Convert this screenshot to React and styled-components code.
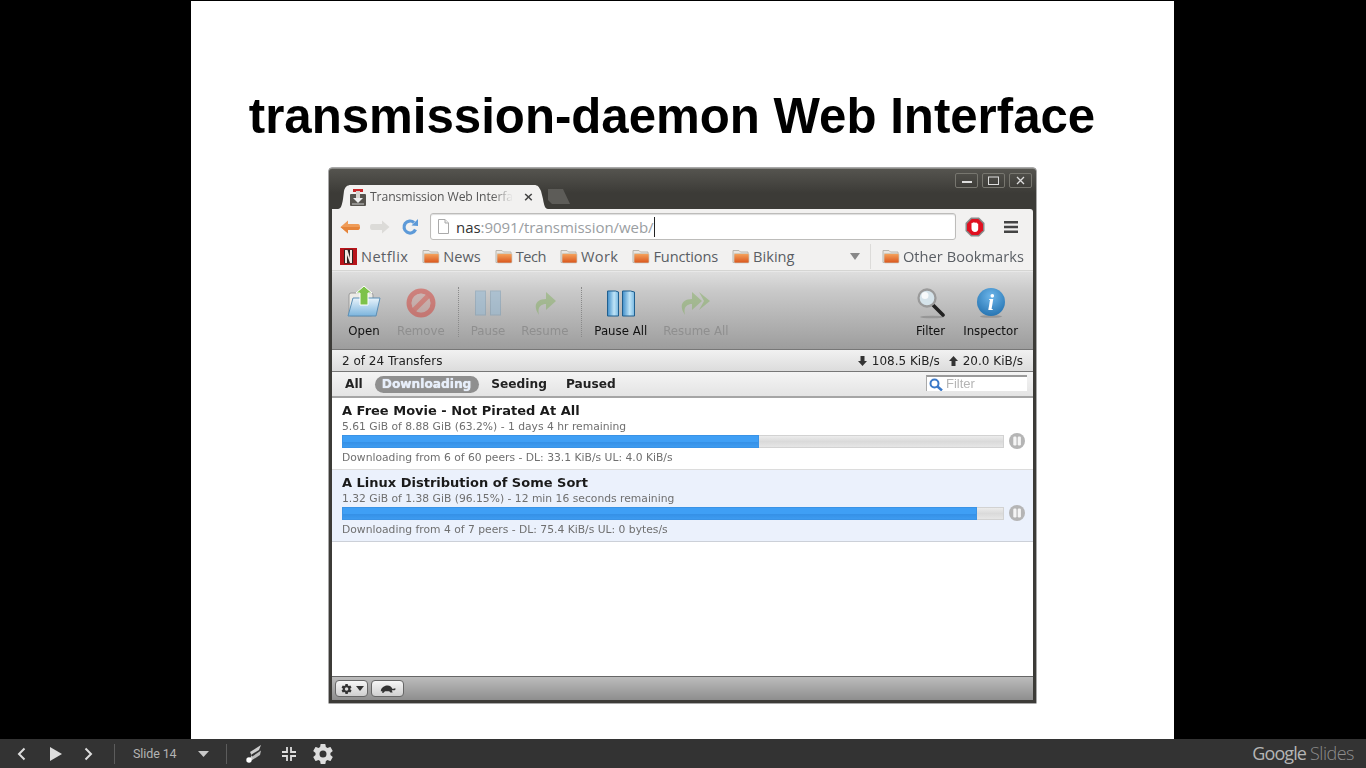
import React from 'react';
import styled, { createGlobalStyle } from 'styled-components';

const Global = createGlobalStyle`
  html, body { margin: 0; padding: 0; background: #000; overflow: hidden; }
  * { box-sizing: border-box; }
`;
const Page = styled.div`
  width: 1366px; height: 768px; display: flex; flex-direction: column; background: #000;
`;
const Stage = styled.main`
  height: 739px; display: flex; justify-content: flex-start; padding: 1px 0 0 191px;
`;
const Slide = styled.section`
  width: 983px; background: #fff; display: flex; flex-direction: column; align-items: center;
`;
const Title = styled.h1`
  margin: 86px 21px 0 0; height: 81px; font: bold 49.2px/58px "Liberation Sans", Arial, sans-serif; color: #000; white-space: nowrap;
`;
const Shot = styled.div`
  width: 707px; height: 535px; display: flex; flex-direction: column; filter: blur(0.35px);
  background: linear-gradient(#55544f, #3c3b37 24px); border-radius: 3px 3px 0 0;
  border-top: 1px solid #8a8a86; padding: 0 3px 3px;
  box-shadow: 0 0 0 .5px #555;
`;
const TitleBar = styled.div`
  height: 40px; display: flex; align-items: flex-end; position: relative; padding-left: 6px;
`;
const Tab = styled.div`
  width: 210px; height: 24px; flex: none; background: #f2f1f0; display: flex; align-items: center; padding: 0 0 0 12px; gap: 4px;
  clip-path: path("M0 24 C3 24 4 20 5 14 L6 6 C7 2 9 0 13 0 L196 0 C200 0 201 2 203 6 L205 14 C206 20 207 24 210 24 Z");
`;
const TabLabel = styled.span`
  white-space: nowrap; font: 12.2px/16px "Open Sans", sans-serif; color: #555;
  letter-spacing: -.1px; width: 143px; flex: none;
  mask-image: linear-gradient(90deg, #000 85%, transparent 100%);
`;
const TabClose = styled.span`
  margin-left: 6px; font: bold 13px/16px "DejaVu Sans", sans-serif; color: #444;
`;
const NewTab = styled.div`
  width: 26px; height: 15px; margin: 0 0 5px -3px; background: #5d5c58;
  clip-path: polygon(3px 0, 18px 0, 25px 15px, 7px 15px, 3px 11px);
`;
const WinButtons = styled.div`
  position: absolute; right: 1px; top: 4px; display: flex; gap: 4px;
`;
const WinBtn = styled.div`
  width: 23px; height: 15px; border: 1px solid #77766f; border-radius: 2px; display: flex; align-items: center; justify-content: center;
  background: linear-gradient(#4e4d48, #3f3e3a);
`;
const ChromeBar = styled.div`
  height: 33px; background: #f2f1f0; border-radius: 0 3px 0 0; display: flex; align-items: center; padding: 2px 12px 0 3px;
`;
const NavIcon = styled.span`
  width: 30px; height: 22px; display: flex; align-items: center; justify-content: center;
`;
const Omni = styled.div`
  width: 526px; height: 27px; margin: 0 9px 0 5px; background: #fff; border: 1px solid #bdbcba; border-radius: 3px;
  display: flex; align-items: center; padding-left: 7px; gap: 7px; box-shadow: inset 0 1px 1px #ddd;
`;
const Url = styled.span`
  font: 15px/20px "Open Sans", sans-serif; color: #9a9ea2; letter-spacing: -.05px; white-space: nowrap;
  border-right: 1px solid #222;
  b { font-weight: 400; color: #333; }
`;
const EndIcons = styled.div`
  display: flex; align-items: center; gap: 19px;
`;
const Bookmarks = styled.div`
  height: 29px; background: #f2f1f0; display: flex; align-items: center; padding: 0 9px 0 8px; border-bottom: 1px solid #d5d5d3;
`;
const Mark = styled.span`
  display: flex; align-items: center; gap: 3px; margin-right: ${p => p.$last ? 0 : 14}px; font: 14.6px/18px "Open Sans", sans-serif; color: #5a5e64; white-space: nowrap;
  letter-spacing: ${p => p.$ls ?? 0}px;
`;
const BarSpacer = styled.div` flex: 1; `;
const MoreCaret = styled.span`
  width: 0; height: 0; border: 5px solid transparent; border-top: 7px solid #888; border-bottom: 0; margin-right: 10px;
`;
const BarSep = styled.span`
  width: 1px; height: 25px; background: #dcdbd9; margin-right: 11px;
`;
const App2 = styled.div`
  flex: 1; display: flex; flex-direction: column; background: #fff; min-height: 0;
`;
const Toolbar = styled.div`
  height: 79px; flex: none; display: flex; align-items: flex-start; padding: 10px 15px 0 14px;
  background: linear-gradient(#dedede, #c9c9c9 25%, #9d9d9d);
  border-top: 1px solid #e8e8e8; border-bottom: 1px solid #777;
`;
const Tool = styled.div`
  display: flex; flex-direction: column; align-items: center; margin-right: ${p => p.$mr ?? 16}px;
  font: 11.75px/14px "DejaVu Sans", Verdana, sans-serif; color: ${p => p.$off ? '#8f8f8f' : '#111'}; white-space: nowrap;
`;
const ToolIcon = styled.span`
  height: 42px; display: flex; align-items: center; justify-content: center;
  opacity: ${p => p.$off ? .45 : 1};
`;
const ToolSep = styled.span`
  height: 50px; margin: 5px 12px 0 -3px; border-left: 1px dotted #8a8a8a;
`;
const Status = styled.div`
  height: 22px; flex: none; display: flex; align-items: center; justify-content: space-between; padding: 1px 10px 0;
  background: linear-gradient(#f1f1f1, #dcdcdc); border-bottom: 1px solid #777;
  font: 12px/14px "DejaVu Sans", Verdana, sans-serif; color: #222;
`;
const Rates = styled.div` display: flex; align-items: center; gap: 9px; `;
const Rate = styled.span` display: flex; align-items: center; gap: 5px; `;
const FilterBar = styled.div`
  height: 26px; flex: none; display: flex; align-items: center; padding: 0 6px 0 6px;
  background: linear-gradient(#f4f4f4, #e4e4e4); border-bottom: 2px solid #a5a5a5;
`;
const Seg = styled.span`
  font: bold 12.2px/17px "DejaVu Sans", Verdana, sans-serif; color: #222; white-space: nowrap; padding: 0 7px; border-radius: 9px;
  margin-right: 5px;
  ${p => p.$on && `background: #8f8f8f; color: #e6eefb; text-shadow: 0 0 1px #fff; padding: 0 8px 0 7px;`}
`;
const SearchBox = styled.div`
  margin: -2px 0 0 auto; width: 101px; height: 16px; background: #fff; border-top: 2px solid #9a9a9a; border-left: 1px solid #aaa;
  display: flex; align-items: center; gap: 3px; padding-left: 2px;
  font: 13px/14px "Liberation Sans", Arial, sans-serif; color: #b5b5b5;
`;
const List = styled.div` flex: 1; background: #fff; min-height: 0; `;
const Row = styled.div`
  height: 72px; padding: 5px 8px 0 10px; border-bottom: 1px solid ${p => p.$alt ? '#ccd0d8' : '#dcdcdc'};
  background: ${p => p.$alt ? '#ebf1fc' : '#fff'};
`;
const RowTitle = styled.div`
  font: bold 13px/16px "DejaVu Sans", Verdana, sans-serif; color: #1a1a1a; white-space: nowrap;
`;
const Meta = styled.div`
  font: 10.75px/15px "DejaVu Sans", Verdana, sans-serif; color: #6f6f6f; white-space: nowrap;
`;
const ProgressRow = styled.div`
  display: flex; align-items: center; gap: 5px; height: 14px; margin: 0 0 2px;
`;
const Track = styled.div`
  width: 662px; height: 13px; flex: none; border: 1px solid #d2d2d2; background: linear-gradient(#ececec, #dadada 50%, #e6e6e6);
  display: flex;
`;
const Fill = styled.div`
  margin: -1px 0 -1px -1px; background: linear-gradient(#3f9ff5 55%, #3590e6 55%, #3d9bf0); border: 1px solid #3a93e6;
`;
const FootBar = styled.div`
  height: 24px; flex: none; display: flex; align-items: center; gap: 3px; padding: 0 3px;
  background: linear-gradient(#bcbcbc, #8e8e8e); border-top: 1px solid #666;
`;
const FootBtn = styled.div`
  width: ${p => p.$w}px; height: 17px; border: 1px solid #666; border-radius: 4px; background: linear-gradient(#f6f6f6, #cfcfcf);
  display: flex; align-items: center; justify-content: center; gap: 3px;
`;
const Bottom = styled.footer`
  height: 29px; background: #333; display: flex; align-items: center; color: #bbb; font-family: Roboto, sans-serif; padding-right: 12px;
`;
const Ctrl = styled.span`
  width: ${p => p.$w}px; display: flex; align-items: center; justify-content: center; flex: none;
`;
const CtrlSep = styled.span`
  width: 1px; height: 20px; background: #5c5c5c; flex: none;
`;
const SlideNo = styled.span`
  font-size: 12.5px; color: #b4b4b4; width: 66px; padding-left: 18px; white-space: nowrap; letter-spacing: -.1px;
`;
const Brand = styled.div`
  margin: 0 0 2px auto; font: 500 18px/24px "Open Sans", sans-serif; color: #b5b5b5; letter-spacing: -.9px; white-space: nowrap;
  span { font-weight: 300; color: #8d8d8d; letter-spacing: -.5px; margin-left: 4px; }
`;

const Folder = () => (
  <svg width="18" height="16" viewBox="0 0 18 16">
    <defs><linearGradient id="fo" x1="0" y1="0" x2="0" y2="1"><stop offset="0" stopColor="#f6a55e" /><stop offset="1" stopColor="#d9541a" /></linearGradient></defs>
    <path d="M1 2.5h6l1.500 1.500H16v10.500H1z" fill="#e8e6e2" stroke="#b9b5ad" strokeWidth="1" />
    <rect x="2" y="5.500" width="15" height="9.500" rx="1" fill="url(#fo)" stroke="#c9cbc4" strokeWidth=".7" />
  </svg>
);
const Netflix = () => (
  <svg width="18" height="17" viewBox="0 0 18 17">
    <rect width="17" height="17" fill="#b8141a" />
    <rect x="4" y="1.500" width="9" height="14" fill="#2b2422" />
    <path d="M5 2v13h2V7l3 8h2V2h-2v8L7.500 2z" fill="#f1e9e2" />
  </svg>
);
const Fav = () => (
  <svg width="16" height="17" viewBox="0 0 16 17">
    <rect x="3" y="0" width="10" height="3" fill="#c9282a" />
    <rect x="0" y="5" width="16" height="12" rx="1" fill="#57544f" />
    <rect x="6" y="2" width="4" height="7" fill="#d8d5d0" />
    <path d="M3 9h10l-5 5z" fill="#eee" />
    <rect x="2" y="14.500" width="12" height="1" fill="#ccc" />
  </svg>
);
const Back = () => (
  <svg width="20" height="14" viewBox="0 0 20 14"><path d="M8 .5 .5 7 8 13.500V10h10a2 3 0 0 0 0-6H8z" fill="#ef9c58" /><path d="M.5 7 8 13.500V10h10a2 3 0 0 0 1.800-3z" fill="#e5843a" /></svg>
);
const Forward = () => (
  <svg width="20" height="14" viewBox="0 0 20 14"><path d="M12 .5 19.500 7 12 13.500V10H2a2 3 0 0 1 0-6h10z" fill="#dcdbd8" /></svg>
);
const Reload = () => (
  <svg width="18" height="18" viewBox="0 0 18 18"><path d="M14.500 11.500a6 6 0 1 1-1.500-7" fill="none" stroke="#5d9ad8" strokeWidth="3.200" /><path d="M10.500 7.500 17 1v7z" fill="#5d9ad8" /></svg>
);
const Doc = () => (
  <svg width="11" height="15" viewBox="0 0 11 15"><path d="M.5.500h6.500l3.500 3.500v10.500H.5z" fill="#fff" stroke="#aaa" /><path d="M7 .5V4h3.500" fill="#eee" stroke="#aaa" /></svg>
);
const Stop = () => (
  <svg width="20" height="20" viewBox="0 0 20 20">
    <path d="M6 .5h8L19.500 6v8L14 19.500H6L.5 14V6z" fill="#888" />
    <path d="M6.700 2h6.600L18 6.700v6.600L13.300 18H6.700L2 13.300V6.700z" fill="#e01020" />
    <path d="M6.500 6.500c0-1 1-1 1.200-.2V6c0-1 1.300-1 1.400 0 .1-1 1.400-1 1.500 0 .2-.8 1.400-.7 1.400.2v.6c.5-.5 1.400-.2 1.200.6v3.800C13.500 13.500 12 15 10 15s-3.500-1.500-3.500-3.500z" fill="#fff" />
  </svg>
);
const Menu = () => (
  <svg width="14" height="14" viewBox="0 0 14 14"><path d="M0 1h14v2.500H0zM0 5.700h14v2.500H0zM0 10.500h14V13H0z" fill="#444" /></svg>
);
const OpenI = () => (
  <svg width="36" height="36" viewBox="0 0 36 36">
    <defs><linearGradient id="op" x1="0" y1="0" x2="0" y2="1"><stop offset="0" stopColor="#e8f3fb" /><stop offset="1" stopColor="#7bb4dd" /></linearGradient></defs>
    <rect x="3" y="8" width="24" height="23" rx="2" fill="#ecebe6" stroke="#999" />
    <path d="M7 13h27l-4 18H2z" fill="url(#op)" stroke="#5c8fb5" />
    <path d="M18 1l8 7h-4v12h-8V8h-4z" fill="#7dc24a" stroke="#fff" />
  </svg>
);
const RemoveI = () => (
  <svg width="30" height="30" viewBox="0 0 30 30"><circle cx="15" cy="15" r="12" fill="none" stroke="#d42a20" strokeWidth="5" /><path d="M7 23 23 7" stroke="#d42a20" strokeWidth="5" /><circle cx="15" cy="15" r="9.500" fill="#e05040" opacity=".35" /></svg>
);
const Bars = () => (
  <svg width="26" height="26" viewBox="0 0 26 26"><rect x=".5" y="1" width="10" height="24" fill="#8bb8da" stroke="#6f97b5" /><rect x="15.500" y="1" width="10" height="24" fill="#8bb8da" stroke="#6f97b5" /></svg>
);
const ResumeI = () => (
  <svg width="24" height="26" viewBox="0 0 24 26"><path d="M6 25C-1 15 4 9 13 9V2l10 9-10 9v-6c-5 0-9 3-7 11z" fill="#7fae58" /></svg>
);
const ResumeAllI = () => (
  <svg width="31" height="26" viewBox="0 0 31 26"><path d="M5 25C-2 15 3 9 12 9V2l10 9-10 9v-6c-5 0-9 3-7 11z" fill="#7fae58" /><path d="M19 2l11 9-11 9 5-9z" fill="#7fae58" /></svg>
);
const PauseAllI = () => (
  <svg width="28" height="27" viewBox="0 0 28 27">
    <defs><linearGradient id="pa" x1="0" y1="0" x2="1" y2="0"><stop offset="0" stopColor="#3f8dc9" /><stop offset=".6" stopColor="#bfe4f7" /><stop offset="1" stopColor="#76b6e0" /></linearGradient></defs>
    <path d="M.5 1h8l3 1v24H.5z" fill="url(#pa)" stroke="#1f5f8f" /><path d="M15.500 1h8l4 1v24h-12z" fill="url(#pa)" stroke="#1f5f8f" />
  </svg>
);
const MagI = () => (
  <svg width="28" height="31" viewBox="0 0 28 31">
    <ellipse cx="15" cy="29" rx="12" ry="1.300" fill="#777" opacity=".5" />
    <path d="M15 16 26 27" stroke="#222" strokeWidth="3.600" strokeLinecap="round" />
    <circle cx="10" cy="10" r="8.500" fill="#d5e3ea" stroke="#9a9a9a" strokeWidth="2.300" />
    <circle cx="8" cy="7.500" r="3.500" fill="#fff" opacity=".8" />
  </svg>
);
const InfoI = () => (
  <svg width="28" height="30" viewBox="0 0 28 30">
    <defs><radialGradient id="in" cx=".5" cy=".3" r=".8"><stop offset="0" stopColor="#6db6ea" /><stop offset="1" stopColor="#1d6cab" /></radialGradient></defs>
    <ellipse cx="14" cy="28.500" rx="11" ry="1.300" fill="#777" opacity=".5" />
    <circle cx="14" cy="14" r="14" fill="url(#in)" />
    <text x="14" y="22" textAnchor="middle" fontFamily="Liberation Serif, serif" fontStyle="italic" fontWeight="700" fontSize="23" fill="#fff">i</text>
  </svg>
);
const Down = () => (
  <svg width="9" height="10" viewBox="0 0 9 10"><path d="M2.500 0h4v5H9L4.500 10 0 5h2.500z" fill="#333" /></svg>
);
const Up = () => (
  <svg width="9" height="10" viewBox="0 0 9 10"><path d="M2.500 10h4V5H9L4.500 0 0 5h2.500z" fill="#333" /></svg>
);
const Lens = () => (
  <svg width="14" height="13" viewBox="0 0 14 13"><circle cx="5.500" cy="5.500" r="4" fill="none" stroke="#3a78c8" strokeWidth="2" /><path d="M8.500 8.500 13 12.500" stroke="#3a78c8" strokeWidth="2.500" /></svg>
);
const PauseDot = () => (
  <svg width="16" height="16" viewBox="0 0 16 16"><circle cx="8" cy="8" r="8" fill="#b5b5b5" /><rect x="4.300" y="3.500" width="3.200" height="9" rx="1.200" fill="#f5f5f5" /><rect x="8.700" y="3.500" width="3.200" height="9" rx="1.200" fill="#f5f5f5" /></svg>
);
const SmallGear = () => (
  <svg width="14" height="14" viewBox="0 0 24 24"><path d="M19.400 13a7.500 7.500 0 0 0 0-2l2.100-1.600-2-3.500-2.500 1a7.500 7.500 0 0 0-1.700-1L15 3.300h-4l-.4 2.600a7.500 7.500 0 0 0-1.700 1l-2.500-1-2 3.500L6.500 11a7.500 7.500 0 0 0 0 2l-2.100 1.600 2 3.500 2.500-1a7.500 7.500 0 0 0 1.700 1l.4 2.600h4l.4-2.600a7.500 7.500 0 0 0 1.700-1l2.500 1 2-3.500z" fill="#333" /><circle cx="13" cy="12" r="3" fill="#ddd" /></svg>
);
const Turtle = () => (
  <svg width="17" height="8" viewBox="0 0 20 9"><path d="M2 7C3 2 7 .5 10 .5s5 2 6 4l3-1c1 .5.5 2-1 2.500h-3l1 2.500h-2.500L12 7H7L5.500 9H3.500L4 7z" fill="#333" /></svg>
);
const Caret = () => (
  <svg width="8" height="5" viewBox="0 0 10 6"><path d="M0 0h10L5 6z" fill="#333" /></svg>
);
const Chevron = ({ left }) => (
  <svg width="10" height="14" viewBox="0 0 10 14"><path d={left ? 'M8.500 1.500 3 7l5.500 5.500' : 'M1.500 1.500 7 7l-5.500 5.500'} fill="none" stroke="#ddd" strokeWidth="2" /></svg>
);
const Play = () => (
  <svg width="12" height="14" viewBox="0 0 12 14"><path d="M0 0l12 7L0 14z" fill="#ddd" /></svg>
);
const DropCaret = () => (
  <svg width="11" height="6" viewBox="0 0 11 6"><path d="M0 0h11L5.500 6z" fill="#c8c8c8" /></svg>
);
const Pointer = () => (
  <svg width="16" height="18" viewBox="0 0 16 18">
    <path d="M15 0 4 7l1.500 2.500L13 5z" fill="#cfcfcf" />
    <path d="M15 5.500 4 13l1.500 2.500L14 10z" fill="#bdbdbd" />
    <path d="M4 7l2 3-3 5 4-2" fill="#cfcfcf" />
    <circle cx="3" cy="15" r="2.700" fill="#fff" />
  </svg>
);
const ExitFull = () => (
  <svg width="14" height="14" viewBox="0 0 14 14"><path d="M5 0v5H0M9 0v5h5M0 9h5v5M14 9H9v5" fill="none" stroke="#ddd" strokeWidth="1.800" /></svg>
);
const BigGear = () => (
  <svg width="24" height="24" viewBox="0 0 24 24"><path fillRule="evenodd" d="M19.400 13c.05-.33.08-.66.08-1s-.03-.67-.08-1l2.100-1.650c.2-.15.25-.42.120-.64l-2-3.460c-.12-.22-.39-.3-.61-.22l-2.490 1c-.52-.4-1.080-.73-1.690-.98l-.38-2.650A.49.49 0 0 0 14 2h-4c-.25 0-.46.18-.49.42l-.38 2.650c-.61.25-1.170.59-1.690.98l-2.490-1c-.23-.09-.49 0-.61.22l-2 3.460c-.13.22-.07.49.12.64L4.570 11c-.05.33-.08.67-.08 1s.03.67.08 1l-2.110 1.650c-.19.15-.24.42-.12.64l2 3.460c.12.22.39.3.61.22l2.490-1c.52.4 1.080.73 1.690.98l.38 2.650c.03.24.24.42.49.42h4c.25 0 .46-.18.49-.42l.38-2.650c.61-.25 1.170-.59 1.690-.98l2.490 1c.23.09.49 0 .61-.22l2-3.460c.12-.22.07-.49-.12-.64zM12 15.500a3.500 3.500 0 1 1 0-7 3.500 3.500 0 0 1 0 7z" fill="#ddd" /></svg>
);

const Progress = ({ pct }) => (
  <ProgressRow>
    <Track><Fill style={{ width: `${pct}%` }} /></Track>
    <PauseDot />
  </ProgressRow>
);

export default function App() {
  return (
    <Page>
      <Global />
      <Stage>
        <Slide>
          <Title>transmission-daemon Web Interface</Title>
          <Shot>
            <TitleBar>
              <Tab><Fav /><TabLabel>Transmission Web Interfa</TabLabel><TabClose>×</TabClose></Tab>
              <NewTab />
              <WinButtons>
                <WinBtn><svg width="10" height="6"><rect y="3" width="10" height="2" fill="#ddd" /></svg></WinBtn>
                <WinBtn><svg width="11" height="9"><rect x=".5" y="1" width="10" height="7.500" fill="none" stroke="#ddd" /></svg></WinBtn>
                <WinBtn><svg width="9" height="9"><path d="M1 1l7 7M8 1 1 8" stroke="#ddd" strokeWidth="1.300" /></svg></WinBtn>
              </WinButtons>
            </TitleBar>
            <ChromeBar>
              <NavIcon><Back /></NavIcon>
              <NavIcon><Forward /></NavIcon>
              <NavIcon><Reload /></NavIcon>
              <Omni><Doc /><Url><b>nas</b>:9091/transmission/web/</Url></Omni>
              <EndIcons><Stop /><Menu /></EndIcons>
            </ChromeBar>
            <Bookmarks>
              <Mark $ls={0.43}><Netflix />Netflix</Mark>
              <Mark><Folder />News</Mark>
              <Mark $ls={-0.5}><Folder />Tech</Mark>
              <Mark $ls={0.4}><Folder />Work</Mark>
              <Mark $ls={-0.15}><Folder />Functions</Mark>
              <Mark><Folder />Biking</Mark>
              <BarSpacer />
              <MoreCaret />
              <BarSep />
              <Mark $last $ls={0.05}><Folder />Other Bookmarks</Mark>
            </Bookmarks>
            <App2>
              <Toolbar>
                <Tool $mr={15}><ToolIcon><OpenI /></ToolIcon>Open</Tool>
                <Tool $off><ToolIcon $off><RemoveI /></ToolIcon>Remove</Tool>
                <ToolSep />
                <Tool $off><ToolIcon $off><Bars /></ToolIcon>Pause</Tool>
                <Tool $off><ToolIcon $off><ResumeI /></ToolIcon>Resume</Tool>
                <ToolSep />
                <Tool><ToolIcon><PauseAllI /></ToolIcon>Pause All</Tool>
                <Tool $off $mr={0}><ToolIcon $off><ResumeAllI /></ToolIcon>Resume All</Tool>
                <BarSpacer />
                <Tool $mr={18}><ToolIcon><MagI /></ToolIcon>Filter</Tool>
                <Tool $mr={0}><ToolIcon><InfoI /></ToolIcon>Inspector</Tool>
              </Toolbar>
              <Status>
                <span>2 of 24 Transfers</span>
                <Rates>
                  <Rate><Down />108.5 KiB/s</Rate>
                  <Rate><Up />20.0 KiB/s</Rate>
                </Rates>
              </Status>
              <FilterBar>
                <Seg>All</Seg>
                <Seg $on>Downloading</Seg>
                <Seg>Seeding</Seg>
                <Seg>Paused</Seg>
                <SearchBox><Lens />Filter</SearchBox>
              </FilterBar>
              <List>
                <Row>
                  <RowTitle>A Free Movie - Not Pirated At All</RowTitle>
                  <Meta>5.61 GiB of 8.88 GiB (63.2%) - 1 days 4 hr remaining</Meta>
                  <Progress pct={63.2} />
                  <Meta>Downloading from 6 of 60 peers - DL: 33.1 KiB/s UL: 4.0 KiB/s</Meta>
                </Row>
                <Row $alt>
                  <RowTitle>A Linux Distribution of Some Sort</RowTitle>
                  <Meta>1.32 GiB of 1.38 GiB (96.15%) - 12 min 16 seconds remaining</Meta>
                  <Progress pct={96.15} />
                  <Meta>Downloading from 4 of 7 peers - DL: 75.4 KiB/s UL: 0 bytes/s</Meta>
                </Row>
              </List>
              <FootBar>
                <FootBtn $w={33}><SmallGear /><Caret /></FootBtn>
                <FootBtn $w={33}><Turtle /></FootBtn>
              </FootBar>
            </App2>
          </Shot>
        </Slide>
      </Stage>
      <Bottom>
        <Ctrl $w={42}><Chevron left /></Ctrl>
        <Ctrl $w={28}><Play /></Ctrl>
        <Ctrl $w={38}><Chevron /></Ctrl>
        <Ctrl $w={6} />
        <CtrlSep />
        <SlideNo>Slide 14</SlideNo>
        <Ctrl $w={45}><DropCaret /></Ctrl>
        <CtrlSep />
        <Ctrl $w={54}><Pointer /></Ctrl>
        <Ctrl $w={16}><ExitFull /></Ctrl>
        <Ctrl $w={52}><BigGear /></Ctrl>
        <Brand>Google<span>Slides</span></Brand>
      </Bottom>
    </Page>
  );
}
